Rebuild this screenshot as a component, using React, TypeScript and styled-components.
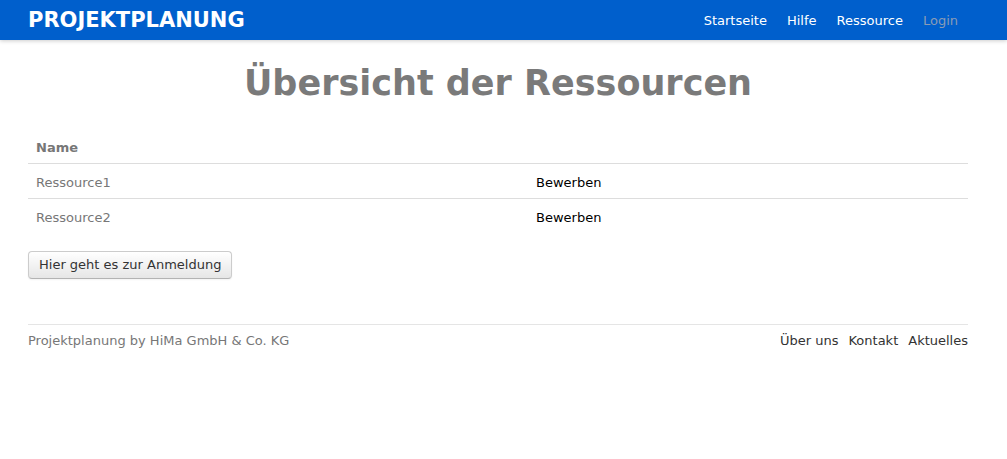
import React from 'react';
import styled, { createGlobalStyle } from 'styled-components';

const GlobalStyle = createGlobalStyle`
  body {
    margin: 0;
    background: #fff;
    font-family: "DejaVu Sans", Verdana, sans-serif;
    font-size: 13px;
    color: #777;
  }
`;

const resources = ['Ressource1', 'Ressource2'];

export default function App() {
  return (
    <>
      <GlobalStyle />
      <NavBar>
        <NavInner>
          <Brand>PROJEKTPLANUNG</Brand>
          <NavLinks>
            <NavLink>Startseite</NavLink>
            <NavLink>Hilfe</NavLink>
            <NavLink>Ressource</NavLink>
            <NavLink $muted>Login</NavLink>
          </NavLinks>
        </NavInner>
      </NavBar>

      <Container>
        <Heading>Übersicht der Ressourcen</Heading>

        <Table>
          <thead>
            <tr>
              <Th $first>Name</Th>
              <Th />
            </tr>
          </thead>
          <tbody>
            {resources.map(r => (
              <tr key={r}>
                <Td>{r}</Td>
                <Td $action>Bewerben</Td>
              </tr>
            ))}
          </tbody>
        </Table>

        <Button>Hier geht es zur Anmeldung</Button>

        <Footer>
          <span>Projektplanung by HiMa GmbH &amp; Co. KG</span>
          <FooterLinks>
            <FooterLink>Über uns</FooterLink>
            <FooterLink>Kontakt</FooterLink>
            <FooterLink>Aktuelles</FooterLink>
          </FooterLinks>
        </Footer>
      </Container>
    </>
  );
}

const NavBar = styled.header`
  height: 40px;
  background: #005fcc;
  box-shadow: 0 1px 4px rgba(0, 0, 0, 0.2);
`;

const NavInner = styled.div`
  width: 940px;
  margin-left: 28px;
  height: 100%;
  display: flex;
  align-items: center;
  justify-content: space-between;
`;

const Brand = styled.div`
  color: #fff;
  font-size: 21px;
  font-weight: bold;
`;

const NavLinks = styled.nav`
  display: flex;
`;

const NavLink = styled.a<{ $muted?: boolean }>`
  padding: 0 10px;
  font-size: 13px;
  color: ${p => (p.$muted ? '#8a9bb5' : '#fff')};
`;

const Container = styled.main`
  width: 940px;
  margin-left: 28px;
`;

const Heading = styled.h1`
  margin: 23px 0 26px;
  text-align: center;
  font-size: 35px;
  line-height: 40px;
  color: #7a7a7a;
`;

const Table = styled.table`
  width: 100%;
  border-collapse: collapse;
  margin-bottom: 18px;
`;

const Th = styled.th<{ $first?: boolean }>`
  text-align: left;
  padding: 10px 8px 6px;
  line-height: 18px;
  font-weight: bold;
  color: #777;
  width: ${p => (p.$first ? '484px' : 'auto')};
`;

const Td = styled.td<{ $action?: boolean }>`
  padding: 10px 8px 6px;
  line-height: 18px;
  border-top: 1px solid #ddd;
  color: ${p => (p.$action ? '#000' : '#777')};
`;

const Button = styled.button`
  font-family: inherit;
  font-size: 13px;
  color: #333;
  padding: 4px 10px;
  line-height: 18px;
  border: 1px solid #ccc;
  border-bottom-color: #b3b3b3;
  border-radius: 4px;
  background: linear-gradient(#fff, #e6e6e6);
  box-shadow: inset 0 1px 0 rgba(255, 255, 255, 0.2), 0 1px 2px rgba(0, 0, 0, 0.05);
`;

const Footer = styled.footer`
  margin-top: 45px;
  border-top: 1px solid #e5e5e5;
  padding-top: 7px;
  display: flex;
  justify-content: space-between;
  line-height: 18px;
`;

const FooterLinks = styled.div`
  display: flex;
  gap: 10px;
`;

const FooterLink = styled.a`
  color: #333;
`;
